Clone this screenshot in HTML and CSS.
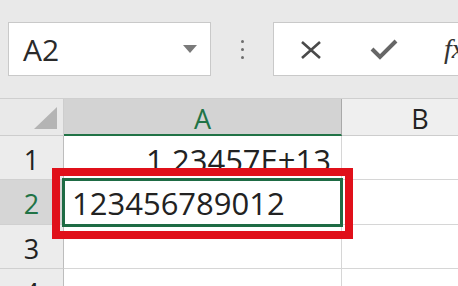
FILE: index.html
```html
<!doctype html>
<html lang="en">
<head>
    <meta charset="UTF-8">
    <title>Sheet</title>
    <link rel="stylesheet" href="styles.css">
</head>
<body>
<div class="toolbar">
    <div class="name-box">
        <span class="name">A2</span>
        <span class="drop"></span>
    </div>
    <div class="dots"><i></i><i></i><i></i></div>
    <div class="formula-box">
        <svg class="icon-x" width="22" height="18" viewBox="0 0 22 18">
            <path d="M2 1 L20 17 M20 1 L2 17" stroke="#4a4a4a" stroke-width="2.6" fill="none"/>
        </svg>
        <svg class="icon-ok" width="28" height="22" viewBox="0 0 28 22">
            <path d="M2 11 L10 19 L26 3" stroke="#666" stroke-width="4" fill="none"/>
        </svg>
        <span class="fx">fx</span>
    </div>
</div>
<div class="sheet">
    <div class="corner"><span class="tri"></span></div>
    <div class="col-head active">A</div>
    <div class="col-head">B</div>
    <div class="col-rest"></div>

    <div class="row-head">1</div>
    <div class="cell num">1.23457E+13</div>
    <div class="cell"></div>
    <div class="cell"></div>

    <div class="row-head active">2</div>
    <div class="cell sel">123456789012
        <span class="sel-border"></span>
        <span class="mark"></span>
    </div>
    <div class="cell"></div>
    <div class="cell"></div>

    <div class="row-head">3</div>
    <div class="cell"></div>
    <div class="cell"></div>
    <div class="cell"></div>

    <div class="row-head">4</div>
    <div class="cell"></div>
    <div class="cell"></div>
    <div class="cell"></div>
</div>
</body>
</html>
```
FILE: styles.css
```css
*{
    margin: 0;
    padding: 0;
    box-sizing: border-box;
}
body{
    width: 458px;
    height: 286px;
    overflow: hidden;
    background-color: #e9e9e9;
    font-family: "Open Sans", "Noto Sans", sans-serif;
    color: #222;
}

.toolbar{
    height: 98px;
    padding: 22px 0 0 8px;
    display: flex;
    align-items: flex-start;
}
.name-box{
    flex-shrink: 0;
    width: 203px;
    height: 54px;
    background: #fff;
    border: 1px solid #c9c9c9;
    display: flex;
    align-items: center;
    justify-content: space-between;
    padding: 0 13px 0 14px;
}
.name{
    font-size: 30px;
    color: #2a2a2a;
    line-height: 1;
    padding-top: 2px;
}
.drop{
    width: 0;
    height: 0;
    border-left: 7px solid transparent;
    border-right: 7px solid transparent;
    border-top: 8px solid #7a7a7a;
}
.dots{
    flex-shrink: 0;
    width: 62px;
    height: 54px;
    display: flex;
    flex-direction: column;
    align-items: center;
    justify-content: center;
    gap: 5px;
}
.dots i{
    width: 3px;
    height: 3px;
    border-radius: 50%;
    background: #6e6e6e;
}
.formula-box{
    flex: 1;
    min-width: 0;
    overflow: hidden;
    height: 54px;
    background: #fff;
    border: 1px solid #c9c9c9;
    border-right: none;
    display: flex;
    align-items: center;
    padding-left: 26px;
}
.formula-box > *{
    flex-shrink: 0;
}
.icon-x{
    margin-top: 2px;
}
.icon-ok{
    margin-left: 48px;
}
.fx{
    margin-left: 46px;
    font-family: "Liberation Serif", serif;
    font-style: italic;
    font-size: 28px;
    color: #333;
}

.sheet{
    display: grid;
    grid-template-columns: 64px 278px 157px 1fr;
    grid-template-rows: 37px 44px 45px 44px 44px;
    background: #fff;
    border-top: 1px solid #cfcfcf;
}
.corner{
    background: #e9e9e9;
    border-right: 1px solid #cdcdcd;
    border-bottom: 1px solid #cdcdcd;
    position: relative;
}
.tri{
    position: absolute;
    left: 34px;
    top: 8px;
    width: 0;
    height: 0;
    border-left: 23px solid transparent;
    border-bottom: 22px solid #b4b4b4;
}
.col-head{
    background: #efefef;
    border-right: 1px solid #cdcdcd;
    border-bottom: 1px solid #cdcdcd;
    text-align: center;
    font-size: 27px;
    line-height: 40px;
    color: #222;
}
.col-head.active{
    background: #d3d3d3;
    color: #217346;
    border-right-color: #a9a9a9;
    border-bottom: 2px solid #217346;
}
.col-rest{
    background: #efefef;
    border-bottom: 1px solid #cdcdcd;
}
.row-head{
    background: #ececec;
    border-right: 1px solid #bdbdbd;
    border-bottom: 1px solid #d0d0d0;
    text-align: center;
    font-size: 27px;
    line-height: 48px;
    color: #222;
}
.row-head.active{
    background: #d6d6d6;
    color: #217346;
}
.cell{
    border-right: 1px solid #d6d6d6;
    border-bottom: 1px solid #d6d6d6;
    font-size: 31px;
    line-height: 48px;
    white-space: nowrap;
}
.cell.num{
    text-align: right;
    padding-right: 10px;
}
.cell.sel{
    position: relative;
    padding-left: 8px;
    line-height: 46px;
}
.sel-border{
    position: absolute;
    left: -2px;
    top: -2px;
    right: -2px;
    bottom: -3px;
    border: 3px solid #1e6b44;
}
.mark{
    position: absolute;
    left: -12px;
    top: -12px;
    right: -12px;
    bottom: -15px;
    border: 8px solid #e0101a;
}
```
